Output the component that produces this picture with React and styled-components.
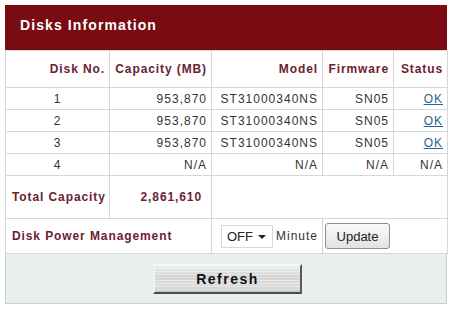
import styled, { createGlobalStyle } from 'styled-components'

const GlobalStyle = createGlobalStyle`
  body {
    margin: 0;
    background: #fff;
    font-family: 'Liberation Sans', Arial, sans-serif;
  }
`

const Panel = styled.div`
  width: 442px;
  margin: 5px 0 0 5px;
`

const Title = styled.div`
  height: 45px;
  box-sizing: border-box;
  background: #7a0b12;
  color: #fff;
  font-weight: bold;
  font-size: 14px;
  letter-spacing: 1.1px;
  display: flex;
  align-items: center;
  padding: 0 0 6px 15px;
`

const Table = styled.table`
  width: 442px;
  border-collapse: collapse;
  table-layout: fixed;
  font-size: 12px;
  letter-spacing: 1px;
  color: #333;
`

const Cell = styled.td`
  border: 1px solid #d6d6d6;
  padding: 0 ${p => p.$pr || 4}px 0 ${p => p.$pl || 4}px;
  height: ${p => p.$h || 21}px;
  text-align: ${p => p.$align || 'right'};
  vertical-align: middle;
  white-space: nowrap;
`

const Head = styled(Cell).attrs({ as: 'th' })`
  font-weight: bold;
  color: #6a2231;
  letter-spacing: 0.9px;
`

const Label = styled(Cell)`
  font-weight: bold;
  color: #6a2231;
  letter-spacing: 0.9px;
`

const StatusLink = styled.a`
  color: #24648f;
  text-decoration: underline;
`

const Controls = styled.div`
  display: flex;
  align-items: center;
  gap: 3px;
`

const SelectWrap = styled.div`
  position: relative;
  width: 53px;
  height: 23px;
`

const Select = styled.select`
  appearance: none;
  width: 100%;
  height: 100%;
  border: 1px solid #d8d8d8;
  background: #fff;
  font-family: 'Liberation Sans', Arial, sans-serif;
  font-size: 13px;
  color: #222;
  padding: 0 0 0 5px;
  outline: none;
`

const Arrow = styled.span`
  position: absolute;
  right: 7px;
  top: 10px;
  border-left: 4px solid transparent;
  border-right: 4px solid transparent;
  border-top: 4px solid #222;
  pointer-events: none;
`

const Unit = styled.span`
  font-size: 12px;
  letter-spacing: 1px;
  color: #333;
`

const UpdateButton = styled.button`
  width: 65px;
  height: 26px;
  border: 1px solid #8d8d8d;
  border-radius: 3px;
  background: linear-gradient(#fbfbfb, #e2e2e2);
  font-family: 'Liberation Sans', Arial, sans-serif;
  font-size: 13px;
  color: #222;
  padding: 0;
`

const Footer = styled.div`
  height: 50px;
  box-sizing: border-box;
  background: #e9efef;
  border: 1px solid #d0d0d0;
  border-top: none;
  display: flex;
  justify-content: center;
  padding-top: 10px;
`

const RefreshButton = styled.button`
  width: 149px;
  height: 30px;
  margin-left: 3px;
  border: 2px solid;
  border-color: #f6f6f6 #5a5a5a #4a4a4a #f2f2f2;
  background:
    repeating-linear-gradient(#0000 0 2px, rgba(255,255,255,0.4) 2px 3px),
    linear-gradient(#ececec, #d2d2d2 45%, #dedede 70%, #cbcbcb);
  font-family: 'Liberation Sans', Arial, sans-serif;
  font-weight: bold;
  font-size: 14px;
  letter-spacing: 1.5px;
  color: #111;
  padding: 0;
`

const disks = [
  { no: 1, cap: '953,870', model: 'ST31000340NS', fw: 'SN05', ok: true },
  { no: 2, cap: '953,870', model: 'ST31000340NS', fw: 'SN05', ok: true },
  { no: 3, cap: '953,870', model: 'ST31000340NS', fw: 'SN05', ok: true },
  { no: 4, cap: 'N/A', model: 'N/A', fw: 'N/A', ok: false },
]

export default function App() {
  return (
    <>
      <GlobalStyle />
      <Panel>
        <Title>Disks Information</Title>
        <Table>
          <colgroup>
            <col style={{ width: 104 }} />
            <col style={{ width: 102 }} />
            <col style={{ width: 111 }} />
            <col style={{ width: 71 }} />
            <col style={{ width: 54 }} />
          </colgroup>
          <tbody>
            <tr>
              <Head $h={36}>Disk No.</Head>
              <Head $h={36}>Capacity (MB)</Head>
              <Head $h={36}>Model</Head>
              <Head $h={36}>Firmware</Head>
              <Head $h={36}>Status</Head>
            </tr>
            {disks.map(d => (
              <tr key={d.no}>
                <Cell $align="center">{d.no}</Cell>
                <Cell>{d.cap}</Cell>
                <Cell>{d.model}</Cell>
                <Cell>{d.fw}</Cell>
                <Cell>{d.ok ? <StatusLink href="#">OK</StatusLink> : 'N/A'}</Cell>
              </tr>
            ))}
            <tr>
              <Label $h={42} $align="left" $pl={6}>Total Capacity</Label>
              <Label $h={42} $pr={9}>2,861,610</Label>
              <Cell $h={42} colSpan={3} />
            </tr>
            <tr>
              <Label $h={34} $align="left" $pl={6} colSpan={2}>Disk Power Management</Label>
              <Cell $h={34} $align="left" $pl={9}>
                <Controls>
                  <SelectWrap>
                    <Select defaultValue="OFF">
                      <option>OFF</option>
                      <option>10</option>
                      <option>30</option>
                      <option>60</option>
                    </Select>
                    <Arrow />
                  </SelectWrap>
                  <Unit>Minute</Unit>
                </Controls>
              </Cell>
              <Cell $h={34} $align="left" $pl={2} colSpan={2}>
                <UpdateButton>Update</UpdateButton>
              </Cell>
            </tr>
          </tbody>
        </Table>
        <Footer>
          <RefreshButton>Refresh</RefreshButton>
        </Footer>
      </Panel>
    </>
  )
}
